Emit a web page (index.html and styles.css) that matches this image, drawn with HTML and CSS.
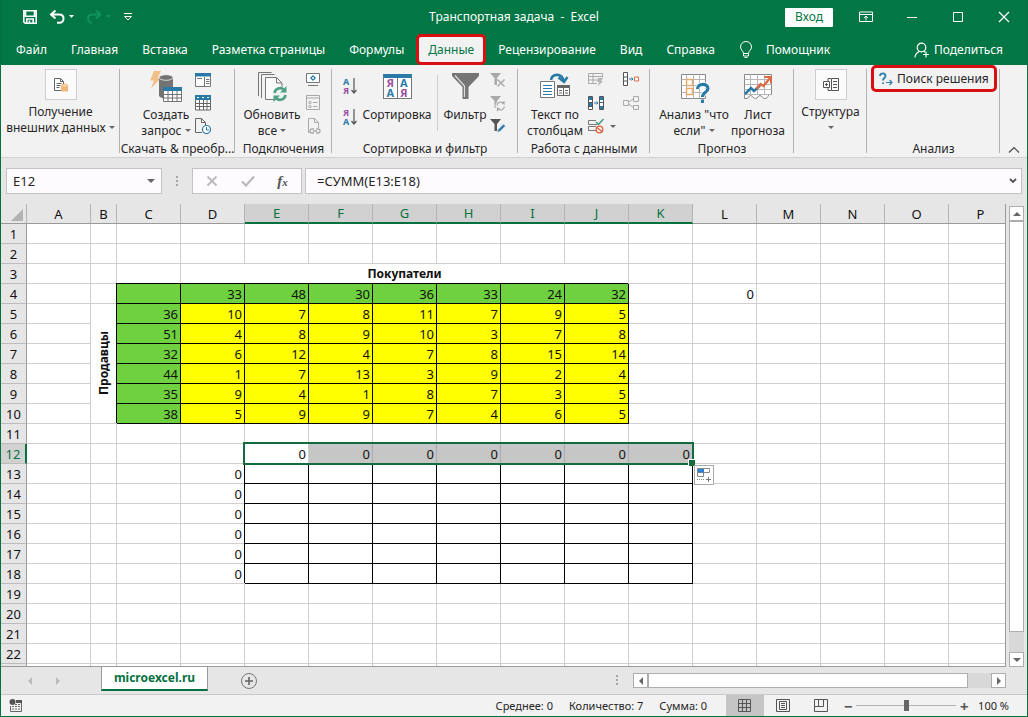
FILE: index.html
```html
<!DOCTYPE html>
<html lang="ru">
<head>
  <meta charset="UTF-8">
  <meta name="viewport" content="width=device-width, initial-scale=1.0">
  <title>Транспортная задача - Excel</title>
  <link rel="stylesheet" href="styles.css">
</head>
<body>

<div class="window">

  <!-- Заголовок окна -->
  <header class="titlebar">
    <div class="quick">
      <button aria-label="Сохранить"><svg width="16" height="16" viewBox="0 0 16 16"><path d="M1.8 1.8h12.4v12.4H3.2l-1.4-1.4zM3.5 2v5.2h9V2M4.800 14v-4h6.400v4M7.500 11.500V14" fill="none" stroke="#fff" stroke-width="1.600"/></svg></button>
      <button class="undo" aria-label="Отменить"><svg width="26" height="16" viewBox="0 0 26 16"><path d="M6.500 1.500L2 5.500l4.500 4M2.500 5.500H10c3 0 4.500 1.800 4.500 4s-1.500 4.300-4 4.300H8" fill="none" stroke="#fff" stroke-width="2"/><path d="M20 6h5l-2.500 3z" fill="#fff"/></svg></button>
      <button class="redo" aria-label="Повторить"><svg width="26" height="16" viewBox="0 0 26 16"><path d="M10 1.500l4.500 4-4.500 4M14 5.500H6.500c-3 0-4.500 1.800-4.500 4s1.500 4.300 4 4.300" fill="none" stroke="#12925c" stroke-width="2"/><path d="M20 6h5l-2.500 3z" fill="#12925c"/></svg></button>
      <button aria-label="Настройка панели"><svg width="10" height="10" viewBox="0 0 10 10"><path d="M1 1.500h8M1.500 4.500h7L5 8z" fill="none" stroke="#fff"/></svg></button>
    </div>
    <div class="doc-title">Транспортная задача&nbsp; -&nbsp; Excel</div>
    <div class="window-buttons">
      <button class="login">Вход</button>
      <button class="sys" aria-label="Параметры ленты"><svg width="14" height="12" viewBox="0 0 14 12"><path d="M.5 1h13v9.500H.5zM.5 3.500h13M7 9.500V5.500M5 7l2-2 2 2" fill="none" stroke="#fff"/></svg></button>
      <button class="sys" aria-label="Свернуть"><svg width="12" height="12" viewBox="0 0 12 12"><path d="M1 6.500h10" stroke="#fff"/></svg></button>
      <button class="sys" aria-label="Развернуть"><svg width="12" height="12" viewBox="0 0 12 12"><path d="M1.500 1.500h9v9h-9z" fill="none" stroke="#fff"/></svg></button>
      <button class="sys" aria-label="Закрыть"><svg width="12" height="12" viewBox="0 0 12 12"><path d="M1 1l10 10M11 1L1 11" stroke="#fff" stroke-width="1.200"/></svg></button>
    </div>
  </header>

  <!-- Вкладки ленты -->
  <nav class="tabs">
    <button>Файл</button>
    <button>Главная</button>
    <button>Вставка</button>
    <button>Разметка страницы</button>
    <button>Формулы</button>
    <button class="active">Данные</button>
    <button>Рецензирование</button>
    <button>Вид</button>
    <button>Справка</button>
    <button class="helper"><svg width="14" height="18" viewBox="0 0 14 18"><path d="M4.500 12.500c0-2.500-3-3.500-3-6.500a5.500 5.500 0 0 1 11 0c0 3-3 4-3 6.500zM4.500 12.500V15h5v-2.500M5.500 16.500h3" fill="none" stroke="#fff"/></svg>Помощник</button>
    <button class="share"><svg width="16" height="16" viewBox="0 0 16 16"><circle cx="7.500" cy="5.500" r="4.300" fill="none" stroke="#fff" stroke-width="1.200"/><path d="M1 15.500c0-3.500 2-5 4.500-6.300M9.500 9.200l1.500 1M12 9.500v6M9 12.500h6" fill="none" stroke="#fff" stroke-width="1.200"/></svg>Поделиться</button>
  </nav>

  <!-- Лента -->
  <section class="ribbon">
    <div class="group g-external">
      <div class="group-body">
        <button class="big boxed"><span class="frame"><svg width="16" height="16" viewBox="0 0 16 16"><path d="M1.500 1.500h6l3 3v9h-9z" fill="#fff" stroke="#666"/><path d="M7.500 1.500v3h3M3.500 6.500h5M3.500 8.500h4M3.500 10.500h3" fill="none" stroke="#666"/><path d="M8 8.500v6h7v-6z" fill="#f0b878"/><ellipse cx="11.500" cy="8.500" rx="3.500" ry="1.500" fill="#f8d5ab" stroke="#e9ad68" stroke-width=".6"/></svg></span>Получение<br>внешних данных <i class="arrow"></i></button>
      </div>
      <div class="group-name"></div>
    </div>

    <div class="group g-query">
      <div class="group-body">
        <button class="big"><svg width="32" height="32" viewBox="0 0 32 32"><path d="M4 0h7L7.500 7H11L1 17.500 4 9.500H0z" fill="#f2bf84"/><path d="M9 7.500v17c0 1.500 3 3 7 3h7v-20z" fill="#737373"/><ellipse cx="16" cy="6.500" rx="7" ry="2.800" fill="#737373" stroke="#f3f2f3" stroke-width=".8"/><path d="M13.500 16.500h18v14h-18z" fill="#fff" stroke="#737373"/><path d="M13 16h19v4H13z" fill="#2a7aa8"/><path d="M13.500 23.500h18M13.500 27h18M18 20v10.500M22.500 20v10.500M27 20v10.500" stroke="#737373"/></svg>Создать<br>запрос <i class="arrow"></i></button>
        <div class="small-col">
          <button aria-label="Показать запросы"><svg width="16" height="16" viewBox="0 0 16 16"><path d="M.5 1.500h15v13H.5z" fill="#fff" stroke="#777"/><path d="M0 1h16v3.500H0z" fill="#2a7aa8"/><path d="M2 6.500h5M9.500 5v9M11 7.500h3.500M11 9.500h3.500M11 11.500h3.500" stroke="#777"/></svg></button>
          <button aria-label="Из таблицы"><svg width="16" height="16" viewBox="0 0 16 16"><path d="M.5 1.500h15v13.500H.5z" fill="#fff" stroke="#666"/><path d="M0 0h16v5H0z" fill="#2a7aa8"/><path d="M2 2.500h2M7 2.500h2M12 2.500h2" stroke="#fff"/><path d="M.5 8.500h15M.5 11.500h15M4.500 5v10M8.500 5v10M12 5v10" stroke="#666"/></svg></button>
          <button aria-label="Последние источники"><svg width="16" height="16" viewBox="0 0 16 16"><path d="M7 14.500H.5V.5h6l4 4V7M6.500.5v4h4" fill="none" stroke="#666"/><circle cx="11.500" cy="11.500" r="4" fill="#fff" stroke="#2a7aa8" stroke-width="1.200"/><path d="M11.500 9v3H14" fill="none" stroke="#2a7aa8"/></svg></button>
        </div>
      </div>
      <div class="group-name">Скачать &amp; преобр...</div>
    </div>

    <div class="group g-connect">
      <div class="group-body">
        <button class="big"><svg width="32" height="32" viewBox="0 0 32 32"><path d="M2.500 25V1.500h13M5.500 27V3.500h13" fill="none" stroke="#777"/><path d="M9.500 28.500v-22h11l5.500 5.500v16.500z" fill="#fbfafb" stroke="#777"/><path d="M20.500 6.500V12H26" fill="none" stroke="#777"/><circle cx="24" cy="23" r="7.500" fill="#f3f2f3"/><path d="M18.500 22a5.500 5.500 0 0 1 9.500-3M29.500 24a5.500 5.500 0 0 1-9.500 3" fill="none" stroke="#4fa283" stroke-width="2.600"/><path d="M30.500 15v6.500H24zM17.500 31v-6.500H24z" fill="#4fa283"/></svg>Обновить<br>все <i class="arrow"></i></button>
        <div class="small-col">
          <button aria-label="Подключения"><svg width="16" height="16" viewBox="0 0 16 16"><path d="M1.500 1.500h13v9h-13zM3 13.500h10" fill="#fff" stroke="#777"/><path d="M8 3l3 3-3 3-3-3z" fill="#2a7aa8"/><path d="M7 6h2M8 5v2" stroke="#fff"/></svg></button>
          <button aria-label="Свойства"><svg width="16" height="16" viewBox="0 0 16 16"><path d="M1.500.5h13v14h-13zM1.500 3h13M8 7.500h4.500M8 11.500h4.500" fill="none" stroke="#a8a8a8"/><circle cx="5" cy="7.500" r="1.200" fill="none" stroke="#a8a8a8"/><circle cx="5" cy="11.500" r="1.200" fill="none" stroke="#a8a8a8"/></svg></button>
          <button aria-label="Изменить связи"><svg width="16" height="16" viewBox="0 0 16 16"><path d="M5 14.500H3.500V.5h6l4 4V10M9.500.5v4h4" fill="none" stroke="#aaa"/><path d="M9 15H7a2 2 0 0 1 0-4h2M11 11h2a2 2 0 0 1 0 4h-2M8 13h4" fill="none" stroke="#aaa" stroke-width="1.300"/></svg></button>
        </div>
      </div>
      <div class="group-name">Подключения</div>
    </div>

    <div class="group g-sort">
      <div class="group-body">
        <div class="sort-col">
          <button aria-label="По возрастанию"><span class="pair"><b class="a">А</b><b class="ya">Я</b></span><svg width="6" height="16" viewBox="0 0 6 16"><path d="M3 0v15M.5 12L3 15l2.500-3" fill="none" stroke="#555" stroke-width="1.200"/></svg></button>
          <button aria-label="По убыванию"><span class="pair"><b class="ya">Я</b><b class="a">А</b></span><svg width="6" height="16" viewBox="0 0 6 16"><path d="M3 0v15M.5 12L3 15l2.500-3" fill="none" stroke="#555" stroke-width="1.200"/></svg></button>
        </div>
        <button class="big"><span class="sort-icon"><b class="ya">Я</b><b class="a">А</b><b class="a">А</b><b class="ya">Я</b></span>Сортировка</button>
        <span class="divider"></span>
        <button class="big"><svg width="32" height="32" viewBox="0 0 32 32"><path d="M3 2h27v3L19.500 16v12h-6V16L3 5z" fill="#757575"/><path d="M6 4.500L15.500 15v11" fill="none" stroke="#ddd" stroke-width="1.200"/></svg>Фильтр</button>
        <div class="small-col">
          <button aria-label="Очистить"><svg width="16" height="16" viewBox="0 0 16 16"><path d="M0 1h11L7 6v7H4.500V6z" fill="#a9a9a9"/><path d="M7.500 7.500l7 7M14.500 7.500l-7 7" stroke="#aaa" stroke-width="1.500"/></svg></button>
          <button aria-label="Повторить"><svg width="16" height="16" viewBox="0 0 16 16"><path d="M0 1h11L7 6v7H4.500V6z" fill="#a9a9a9"/><circle cx="10.500" cy="11" r="5" fill="#f3f2f3"/><path d="M7 10.500a4 4 0 0 1 7-2V6M14.500 8.500H12M14.500 11.500a4 4 0 0 1-7 2V16M7 13.500h2.500" fill="none" stroke="#aaa" stroke-width="1.300"/></svg></button>
          <button aria-label="Дополнительно"><svg width="16" height="16" viewBox="0 0 16 16"><path d="M0 1h11L7 6v7H4.500V6z" fill="#555"/><path d="M7 14.500l1-3 5.500-5.500 2 2L10 13.500z" fill="#2a7aa8" stroke="#f3f2f3" stroke-width=".6"/></svg></button>
        </div>
      </div>
      <div class="group-name">Сортировка и фильтр</div>
    </div>

    <div class="group g-data">
      <div class="group-body">
        <button class="big"><svg width="32" height="32" viewBox="0 0 32 32"><path d="M12 9c1-6 10-8 13 1" fill="none" stroke="#2a7aa8" stroke-width="2.600"/><path d="M19.500 6.500L25 11l3.500-5" fill="none" stroke="#2a7aa8" stroke-width="2.400"/><path d="M1.500 10.500h14v16h-14z" fill="#fff" stroke="#777"/><path d="M4 14.500h9M4 17.500h9M4 20.500h9M4 23.500h9" stroke="#2a7aa8"/><path d="M18.500 14.500h12v10h-12z" fill="#fff" stroke="#666"/><path d="M18 14h13v3H18z" fill="#666"/><path d="M24.500 16v8M20 19.500h3M20 22h3M26 19.500h3M26 22h3" stroke="#666"/></svg>Текст по<br>столбцам</button>
        <div class="small-col">
          <button aria-label="Мгновенное заполнение"><svg width="16" height="16" viewBox="0 0 16 16"><path d="M9 11.500H.5v-10h14v4M.5 4.500h14M.5 8h9M5 2v9.500" fill="none" stroke="#aaa"/><path d="M10 6h5l-2 3h2l-5 5 1-4H9z" fill="#b5b5b5"/></svg></button>
          <button aria-label="Удалить дубликаты"><svg width="16" height="16" viewBox="0 0 16 16"><path d="M.5 1.500h4v13h-4zM11.500 1.500h4v13h-4z" fill="#fff" stroke="#555"/><path d="M1 2h3v3H1zM1 8h3v3H1zM12 2h3v3h-3zM12 11h3v3h-3z" fill="#2a7aa8"/><path d="M1 7.500h3M1 11.500h3M12 7.500h3" stroke="#555"/><path d="M6 8h4M8.500 6.500L10 8 8.500 9.500" fill="none" stroke="#2a7aa8"/></svg></button>
          <button class="with-arrow" aria-label="Проверка данных"><svg width="16" height="16" viewBox="0 0 16 16"><path d="M9 6.500H.5v-4H8M8 12.500H.5v-4H8" fill="none" stroke="#777"/><path d="M8 4l2.500 2.500L15.500 1" fill="none" stroke="#3b9c7b" stroke-width="1.500"/><circle cx="11.500" cy="11.500" r="3.300" fill="#f3f2f3" stroke="#e2603c" stroke-width="1.300"/><path d="M9 9.500l5 4" stroke="#e2603c" stroke-width="1.300"/></svg> <i class="arrow"></i></button>
        </div>
        <div class="small-col">
          <button aria-label="Консолидация"><svg width="18" height="16" viewBox="0 0 18 16"><path d="M1.500.5h4v13h-4zM1.500 5h4M1.500 9h4" fill="#fff" stroke="#555"/><path d="M7 7h4M9.500 5.500L11 7 9.500 8.500" fill="none" stroke="#2a7aa8"/><path d="M12.500 5h4v4h-4z" fill="#fff" stroke="#dd6a45"/></svg></button>
          <button aria-label="Отношения"><svg width="18" height="16" viewBox="0 0 18 16"><path d="M1.500 5.500h5v5h-5zM11.500 1.500h5v5h-5zM11.500 10.500h5v4h-5zM6.500 7l5-3M6.500 9l5 3.500" fill="none" stroke="#aaa"/></svg></button>
        </div>
      </div>
      <div class="group-name">Работа с данными</div>
    </div>

    <div class="group g-forecast">
      <div class="group-body">
        <button class="big"><svg width="32" height="32" viewBox="0 0 32 32"><path d="M3.500 3.500h24v24h-24z" fill="#fff" stroke="#888"/><path d="M3.500 8.500h24M3.500 14.500h24M3.500 21.500h24M8.500 3.500v24M15.500 3.500v24M21.500 3.500v24" stroke="#b5b5b5"/><path d="M8.500 8.500h6v6h-6zM8.500 17.500h6v6h-6z" fill="#fff" stroke="#eaa96b" stroke-width="1.400"/><path d="M19.500 18c0-6 10.500-6 10.500-.5 0 4-5.500 3.500-5.500 8.500M24.500 28v3.500" fill="none" stroke="#fff" stroke-width="5"/><path d="M19.500 18c0-6 10.500-6 10.500-.5 0 4-5.500 3.500-5.500 8.500M24.500 28.500V32" fill="none" stroke="#2a7aa8" stroke-width="3.200"/></svg>Анализ "что<br>если" <i class="arrow"></i></button>
        <button class="big"><svg width="32" height="32" viewBox="0 0 32 32"><path d="M2.500 3.500h27v20h-2c-1 0-2 4-4.500 4-3 0-3-3-5-3s-2 3-4.500 3-3-3-5-3-2 3-3.500 3H2.500z" fill="#fff" stroke="#888"/><path d="M2.500 8.500h27M2.500 13.500h27M2.500 18.500h27M2.500 23.500h27M8.500 3.500v20M15.500 3.500v20M22.500 3.500v20" stroke="#b5b5b5"/><path d="M3 23l6-6 3 3 6-5.500" fill="none" stroke="#2a7aa8" stroke-width="2.600"/><path d="M14.500 18l4-5 3 2 6.500-8" fill="none" stroke="#dd6a45" stroke-width="2.400"/><path d="M22.500 6H29v6.500" fill="none" stroke="#dd6a45" stroke-width="2"/></svg>Лист<br>прогноза</button>
      </div>
      <div class="group-name">Прогноз</div>
    </div>

    <div class="group g-outline">
      <div class="group-body">
        <button class="big boxed"><span class="frame"><svg width="16" height="16" viewBox="0 0 16 16"><path d="M.5 4.500h6v6h-6zM2 7.500h3M3.500 6v3M8 1.500H5v3M8 13.500H5v-3M8.500 1.500h7v12h-7zM10 4.500h4M10 7.500h4M10 10.500h4" fill="none" stroke="#555"/></svg></span>Структура<br><i class="arrow"></i></button>
      </div>
      <div class="group-name"></div>
    </div>

    <div class="group g-analysis">
      <div class="group-body">
        <button class="solver"><svg width="14" height="14" viewBox="0 0 14 14"><path d="M1 4c0-3.500 5.500-3.500 5.500 0C6.500 6 4 6 4 8.500M4 10.500V12" fill="none" stroke="#2f7fb0" stroke-width="1.900"/><path d="M7 10.500h6M10.500 8l2.500 2.500-2.500 2.500" fill="none" stroke="#2f7fb0" stroke-width="1.200"/></svg>Поиск решения</button>
      </div>
      <div class="group-name">Анализ</div>
    </div>

    <button class="collapse" aria-label="Свернуть ленту"><svg width="12" height="8" viewBox="0 0 12 8"><path d="M1 6.500l5-5 5 5" fill="none" stroke="#444" stroke-width="1.100"/></svg></button>
  </section>

  <!-- Строка формул -->
  <section class="formula-bar">
    <div class="name-box"><input type="text" value="E12" aria-label="Имя"><i class="arrow"></i></div>
    <span class="dots"></span>
    <div class="formula-buttons">
      <button aria-label="Отмена"><svg width="12" height="12" viewBox="0 0 12 12"><path d="M1.500 1.500l9 9M10.500 1.500l-9 9" stroke="#b9b9b9" stroke-width="1.800"/></svg></button>
      <button aria-label="Ввод"><svg width="14" height="12" viewBox="0 0 14 12"><path d="M1 6.500l4 4 8-9" fill="none" stroke="#b9b9b9" stroke-width="2.200"/></svg></button>
      <button class="fx" aria-label="Вставить функцию">f<small>x</small></button>
    </div>
    <div class="formula"><input type="text" value="=СУММ(E13:E18)" aria-label="Формула"><svg width="8" height="6" viewBox="0 0 8 6"><path d="M1 1l3 3 3-3" fill="none" stroke="#555" stroke-width="1.800"/></svg></div>
  </section>

  <!-- Лист -->
  <main class="sheet">
    <div class="grid">
      <table>
        <colgroup id="cols"></colgroup>
        <thead><tr id="head"></tr></thead>
        <tbody id="rows"></tbody>
      </table>
    </div>
    <div class="vscroll">
      <button aria-label="Вверх"><i class="tri up"></i></button>
      <span class="thumb"></span>
      <span class="track"></span>
      <button aria-label="Вниз"><i class="tri down"></i></button>
    </div>
  </main>

  <!-- Ярлыки листов -->
  <section class="sheet-tabs">
    <div class="sheet-nav"><i class="tri left pale"></i><i class="tri right pale"></i></div>
    <button class="sheet-tab">microexcel.ru</button>
    <button class="add" aria-label="Новый лист"><svg width="18" height="18" viewBox="0 0 18 18"><circle cx="9" cy="9" r="7.500" fill="none" stroke="#777"/><path d="M5 9h8M9 5v8" stroke="#666" stroke-width="1.600"/></svg></button>
    <span class="dots"></span>
    <div class="hscroll">
      <button aria-label="Влево"><i class="tri left"></i></button>
      <span class="thumb"></span>
      <span class="track"></span>
      <button aria-label="Вправо"><i class="tri right"></i></button>
    </div>
  </section>

  <!-- Строка состояния -->
  <footer class="status">
    <svg class="macro" width="14" height="14" viewBox="0 0 14 14"><circle cx="3.500" cy="3" r="3" fill="#555"/><path d="M7 1h6v3H7z" fill="#555"/><path d="M1.500 7v5.500h11V4" fill="none" stroke="#666"/><path d="M3 7.500h2M6 7.500h2M9 7.500h2M3 10h2M6 10h2M9 10h2M6 5.500h2M9 5.500h2" stroke="#666"/></svg>
    <div class="stats"><span>Среднее: 0</span><span>Количество: 7</span><span>Сумма: 0</span></div>
    <div class="views">
      <button class="active" aria-label="Обычный"><svg width="14" height="14" viewBox="0 0 14 14"><path d="M.5.5h12v12H.5zM.5 4.500h12M.5 8.500h12M4.500.5v12M8.500.5v12" fill="none" stroke="#555"/></svg></button>
      <button aria-label="Разметка страницы"><svg width="14" height="14" viewBox="0 0 14 14"><path d="M.5.5h13v12H.5zM3.500 2.500h7v8h-7zM5 4.500h4M5 6.500h4M5 8.500h4" fill="none" stroke="#555"/></svg></button>
      <button aria-label="Страничный режим"><svg width="14" height="14" viewBox="0 0 14 14"><path d="M.5.5h13v12H.5zM4.500.5v7M9.500.5v7M.5 7.500h9" fill="none" stroke="#555"/></svg></button>
    </div>
    <div class="zoom">
      <button aria-label="Уменьшить">−</button>
      <input type="range" min="0" max="100" value="50" aria-label="Масштаб">
      <button aria-label="Увеличить">+</button>
      <span>100 %</span>
    </div>
  </footer>

</div>

<script src="script.js"></script>
</body>
</html>
```

FILE: styles.css
```css
* {
  box-sizing: border-box;
}
body {
  margin: 0;
  font-family: "Noto Sans", "Open Sans", sans-serif;
  font-size: 12px;
  line-height: 16px;
  color: #262626;
}
button {
  font: inherit;
  color: inherit;
  background: none;
  border: none;
  padding: 0;
}
input {
  font: inherit;
  color: inherit;
  margin: 0;
}
svg {
  display: block;
  flex: none;
}
.window {
  display: flex;
  flex-direction: column;
  height: 100vh;
  border: 1px solid #04713f;
  border-top: none;
  background-color: #e7e6e7;
  overflow: hidden;
}

/* Заголовок */
.titlebar {
  display: grid;
  grid-template-columns: 1fr auto 1fr;
  align-items: center;
  height: 34px;
  flex: none;
  background-color: #027645;
  color: #fff;
}
.quick {
  display: flex;
  align-items: center;
  gap: 11px;
  padding-left: 21px;
}
.window-buttons {
  display: flex;
  align-items: center;
  justify-content: flex-end;
}
.login {
  background-color: #fff;
  color: #027645;
  width: 48px;
  height: 19px;
  border-radius: 1px;
  margin-right: 10px;
}
.sys {
  width: 46px;
  height: 32px;
  display: flex;
  align-items: center;
  justify-content: center;
}

/* Вкладки */
.tabs {
  display: flex;
  height: 31px;
  flex: none;
  background-color: #027645;
  color: #fff;
  padding-left: 3px;
}
.tabs button {
  padding: 0 12px;
}
.tabs .active {
  background-color: #f3f2f3;
  color: #027645;
  border: 3px solid #d80f12;
  border-radius: 5px;
  padding: 0 9px;
}
.tabs .helper,
.tabs .share {
  display: flex;
  align-items: center;
  gap: 13px;
}
.tabs .share {
  gap: 4px;
  margin-left: auto;
  padding-right: 24px;
}

/* Лента */
.ribbon {
  display: flex;
  height: 93px;
  flex: none;
  background-color: #f3f2f3;
  border-bottom: 1px solid #d2d0d2;
}
.group {
  position: relative;
  display: flex;
  flex-direction: column;
  flex: none;
}
.group::after {
  content: "";
  position: absolute;
  right: 0;
  top: 4px;
  bottom: 4px;
  width: 1px;
  background-color: #b4b2b4;
}
.group-body {
  display: grid;
  align-items: start;
  height: 76px;
}
.group-name {
  text-align: center;
  white-space: nowrap;
}
.g-external { width: 119px; }
.g-query { width: 115px; }
.g-connect { width: 97px; }
.g-sort { width: 186px; }
.g-data { width: 132px; }
.g-forecast { width: 144px; }
.g-outline { width: 73px; }
.g-analysis { width: 133px; }
.g-query .group-body {
  grid-template-columns: 54px 16px;
  column-gap: 2px;
  padding-left: 19px;
}
.g-connect .group-body {
  grid-template-columns: 58px 16px;
  column-gap: 4px;
  padding-left: 8px;
}
.g-sort .group-body {
  grid-template-columns: 18px 74px 6px 50px 16px;
  padding-left: 10px;
}
.g-data .group-body {
  grid-template-columns: 58px 30px 18px;
  column-gap: 4px;
  padding-left: 8px;
}
.g-forecast .group-body {
  grid-template-columns: 72px 56px;
  padding-left: 8px;
}
.big {
  padding-top: 6px;
  white-space: nowrap;
}
.big svg {
  margin: 0 auto 4px;
}
.boxed {
  padding-top: 4px;
}
.frame {
  display: flex;
  align-items: center;
  width: 32px;
  height: 31px;
  margin: 0 auto 4px;
  border: 1px solid #cfcdcf;
  background-color: #fcfbfc;
}
.frame svg {
  margin: 0 auto;
}
.arrow {
  display: inline-block;
  width: 0;
  height: 0;
  border: 3px solid transparent;
  border-top-color: #666;
  border-bottom: none;
  vertical-align: 3px;
}
.small-col {
  display: flex;
  flex-direction: column;
  gap: 7px;
  padding-top: 7px;
}
.small-col button {
  height: 16px;
}
.with-arrow {
  display: flex;
  align-items: center;
  gap: 6px;
}
.sort-col {
  display: flex;
  flex-direction: column;
  gap: 13px;
  padding-top: 12px;
}
.sort-col button {
  display: flex;
  align-items: center;
  gap: 2px;
  padding-left: 1px;
  height: 18px;
}
.pair {
  display: grid;
  font-size: 9px;
  line-height: 9px;
}
.a {
  color: #2a7aa8;
}
.ya {
  color: #9a4fa0;
}
.sort-icon {
  display: grid;
  grid-template-columns: 1fr 1fr;
  width: 29px;
  height: 25px;
  margin: 3px auto 8px;
  border: 1px solid #777;
  border-top: 4px solid #2a7aa8;
  background: linear-gradient(#777, #777) center / 1px 100% no-repeat #fff;
  font-size: 11px;
  line-height: 10px;
}
.divider {
  width: 1px;
  height: 56px;
  margin: 10px auto 0;
  background-color: #d0ced0;
}
.solver {
  display: flex;
  align-items: center;
  gap: 4px;
  height: 27px;
  margin: 0 4px;
  padding: 0 5px;
  border: 3px solid #d80f12;
  border-radius: 5px;
  white-space: nowrap;
}
.collapse {
  margin: auto 7px 3px auto;
}

/* Строка формул */
.formula-bar {
  display: flex;
  height: 46px;
  flex: none;
  padding: 10px 5px 10px;
  font-size: 13px;
}
.name-box,
.formula-buttons,
.formula {
  display: flex;
  align-items: center;
  height: 26px;
  background-color: #fdfbfd;
  border: 1px solid #c4c2c4;
}
.name-box {
  width: 156px;
  padding-right: 6px;
}
.name-box .arrow {
  border-width: 4px;
  border-bottom: none;
}
.formula-bar input {
  flex: 1;
  min-width: 0;
  border: none;
  background: none;
  padding: 0 6px;
}
.formula-bar .formula input {
  padding-left: 11px;
}
.dots {
  width: 2px;
  height: 11px;
  background: repeating-linear-gradient(#a5a5a5 0 2px, transparent 2px 4px);
}
.formula-bar .dots {
  margin: 8px 14px;
}
.formula-buttons {
  width: 110px;
  justify-content: space-around;
  padding: 0 2px;
}
.fx {
  font-family: "Liberation Serif", serif;
  font-style: italic;
  font-weight: bold;
  font-size: 15px;
  color: #555;
}
.fx small {
  font-size: 11px;
}
.formula {
  flex: 1;
  margin-left: 3px;
  padding-right: 4px;
}

/* Лист */
.sheet {
  display: flex;
  flex: 1;
  min-height: 0;
}
.grid {
  flex: 1;
  overflow: hidden;
  border-right: 1px solid #9a9a9a;
  border-bottom: 1px solid #9a9a9a;
  background-color: #fff;
}
table {
  table-layout: fixed;
  width: calc(100% + 8px);
  border-collapse: separate;
  border-spacing: 0;
  font-size: 13px;
  color: #111;
}
.col-num { width: 26px; }
.col-b { width: 26px; }
.col { width: 64px; }
th,
td {
  height: 20px;
  padding: 0 2px;
  line-height: 18px;
  border-right: 1px solid #d0cfd0;
  border-bottom: 1px solid #d0cfd0;
  white-space: nowrap;
}
th {
  background-color: #e7e6e7;
  font-weight: normal;
  text-align: center;
}
thead th {
  border-right-color: #b5b3b5;
  border-bottom-color: #9a9a9a;
}
tbody th {
  border-right-color: #9a9a9a;
  border-bottom-color: #bdbbbd;
}
thead .picked {
  background-color: #d2d1d2;
  color: #04713f;
  border-bottom: 2px solid #04713f;
}
tbody .picked {
  background-color: #d2d1d2;
  color: #04713f;
  border-right: 2px solid #04713f;
}
td {
  text-align: right;
}
.corner::after {
  content: "";
  display: block;
  width: 0;
  height: 0;
  margin: 3px 1px 0 auto;
  border-left: 12px solid transparent;
  border-bottom: 12px solid #b3b1b3;
}
.title {
  font-size: 12px;
  font-weight: bold;
  text-align: center;
}
.side {
  padding: 0;
  text-align: center;
}
.side span {
  writing-mode: vertical-rl;
  transform: rotate(180deg);
  font-size: 12px;
  font-weight: bold;
  line-height: 24px;
  vertical-align: middle;
}
.green,
.yellow,
.boxed-cell {
  border-color: #000;
  box-shadow: -1px -1px #000;
}
.green {
  background-color: #6fd13f;
}
.yellow {
  background-color: #ff0;
}
.selected {
  background-color: #c6c6c6;
  border-right-color: #a9a9a9;
}
.anchor {
  position: relative;
}
.selection {
  position: absolute;
  left: -2px;
  top: -2px;
  width: 451px;
  height: 23px;
  border: 2px solid #14693f;
  z-index: 1;
}
.selection::after {
  content: "";
  position: absolute;
  right: -3px;
  bottom: -3px;
  width: 6px;
  height: 6px;
  background-color: #14693f;
  border: 1px solid #fff;
  border-right: none;
  border-bottom: none;
}
.autofill {
  position: absolute;
  left: 449px;
  top: 21px;
  width: 20px;
  height: 20px;
  padding: 2px;
  background-color: #fff;
  border: 1px solid #aaa;
  z-index: 1;
}

/* Полосы прокрутки */
.vscroll {
  display: flex;
  flex-direction: column;
  width: 15px;
  flex: none;
  margin: 2px 3px 0;
}
.vscroll button,
.hscroll button {
  display: flex;
  align-items: center;
  justify-content: center;
  flex: none;
  width: 15px;
  height: 15px;
  background-color: #fff;
  border: 1px solid #aeacae;
}
.thumb {
  flex: 1;
  background-color: #fff;
  border: 1px solid #aeacae;
}
.track {
  flex: none;
  background-color: #d9d8d9;
}
.vscroll .track {
  height: 20px;
}
.hscroll .track {
  width: 23px;
}
.tri {
  width: 0;
  height: 0;
  border: 4px solid transparent;
}
.up {
  border-top: none;
  border-bottom-color: #666;
}
.down {
  border-bottom: none;
  border-top-color: #666;
}
.left {
  border-left: none;
  border-right-color: #666;
}
.right {
  border-right: none;
  border-left-color: #666;
}
.left.pale {
  border-right-color: #bbb;
}
.right.pale {
  border-left-color: #bbb;
}

/* Ярлыки */
.sheet-tabs {
  display: flex;
  align-items: center;
  height: 27px;
  flex: none;
}
.sheet-nav {
  display: flex;
  gap: 24px;
  width: 100px;
  padding-left: 27px;
}
.sheet-tab {
  align-self: flex-start;
  width: 107px;
  height: 24px;
  background-color: #fff;
  color: #04713f;
  font-weight: bold;
  border: 1px solid #9a9a9a;
  border-top: none;
  border-bottom: 2px solid #04713f;
}
.add {
  margin-left: 32px;
}
.sheet-tabs .dots {
  margin-left: auto;
}
.hscroll {
  display: flex;
  width: 373px;
  height: 15px;
  margin: 0 21px 0 15px;
}

/* Строка состояния */
.status {
  display: flex;
  align-items: center;
  height: 22px;
  flex: none;
  background-color: #f3f2f3;
  border-top: 1px solid #cbc9cb;
  font-size: 11px;
}
.macro {
  margin-left: 8px;
}
.stats {
  display: flex;
  gap: 16px;
  margin-left: auto;
  margin-right: 19px;
}
.views {
  display: flex;
}
.views button {
  display: flex;
  align-items: center;
  justify-content: center;
  width: 38px;
  height: 21px;
}
.views .active {
  background-color: #c6c5c6;
}
.zoom {
  display: flex;
  align-items: center;
  gap: 4px;
  margin: 0 18px 0 4px;
}
.zoom button {
  width: 8px;
  font-size: 15px;
  font-weight: bold;
  color: #555;
}
.zoom input {
  appearance: none;
  width: 100px;
  height: 12px;
  background: linear-gradient(#b0b0b0, #b0b0b0) center / 100% 1px no-repeat;
}
.zoom input::-webkit-slider-thumb {
  appearance: none;
  width: 5px;
  height: 11px;
  background-color: #666;
}
.zoom span {
  margin-left: 6px;
}
```

FILE: script.js
```js
const letters = 'ABCDEFGHIJKLMNOP'.split('');
const picked = 'EFGHIJK';

const costs = {
  4: ['', 33, 48, 30, 36, 33, 24, 32],
  5: [36, 10, 7, 8, 11, 7, 9, 5],
  6: [51, 4, 8, 9, 10, 3, 7, 8],
  7: [32, 6, 12, 4, 7, 8, 15, 14],
  8: [44, 1, 7, 13, 3, 9, 2, 4],
  9: [35, 9, 4, 1, 8, 7, 3, 5],
  10: [38, 5, 9, 9, 7, 4, 6, 5]
};

const selectionHtml = `<span class="selection"></span>
  <svg class="autofill" viewBox="0 0 14 14"><path d="M.5.5h12v4H.5zM.5 4.500h6v4h-6z" fill="#fff" stroke="#888"/>
  <path d="M1 1h6v3.500H1z" fill="#2f7fd0"/><path d="M0 11.500h8" stroke="#888" stroke-dasharray="1 1"/>
  <path d="M9 11.500h5M11.500 9v5" stroke="#777"/></svg>`;

document.getElementById('cols').innerHTML = '<col class="col-num">' +
  letters.map(l => l === 'P' ? '<col>' : `<col class="${l === 'B' ? 'col-b' : 'col'}">`).join('');

document.getElementById('head').innerHTML = '<th class="corner"></th>' +
  letters.map(l => `<th class="${picked.includes(l) ? 'picked' : ''}">${l}</th>`).join('');

function cell(letter, row) {
  const i = letters.indexOf(letter);

  // Объединённые ячейки
  if (row === 3 && letter === 'D') return '<td class="title" colspan="7">Покупатели</td>';
  if (row === 3 && i > 3 && i < 10) return '';
  if (letter === 'B' && row === 5) return '<td class="side" rowspan="6"><span>Продавцы</span></td>';
  if (letter === 'B' && row > 5 && row < 11) return '';

  if (costs[row] && i > 1 && i < 10) {
    const color = row === 4 || letter === 'C' ? 'green' : 'yellow';
    return `<td class="${color}">${costs[row][i - 2]}</td>`;
  }
  if (row === 12 && letter === 'E') return `<td class="anchor">0${selectionHtml}</td>`;
  if (row === 12 && picked.includes(letter)) return '<td class="selected">0</td>';
  if (row > 12 && row < 19) {
    if (letter === 'D') return '<td>0</td>';
    if (picked.includes(letter)) return '<td class="boxed-cell"></td>';
  }
  if (letter === 'L' && row === 4) return '<td>0</td>';
  return '<td></td>';
}

let html = '';
for (let row = 1; row <= 23; row++) {
  html += `<tr><th class="${row === 12 ? 'picked' : ''}">${row < 23 ? row : ''}</th>`;
  html += letters.map(l => cell(l, row)).join('') + '</tr>';
}
document.getElementById('rows').innerHTML = html;
```
